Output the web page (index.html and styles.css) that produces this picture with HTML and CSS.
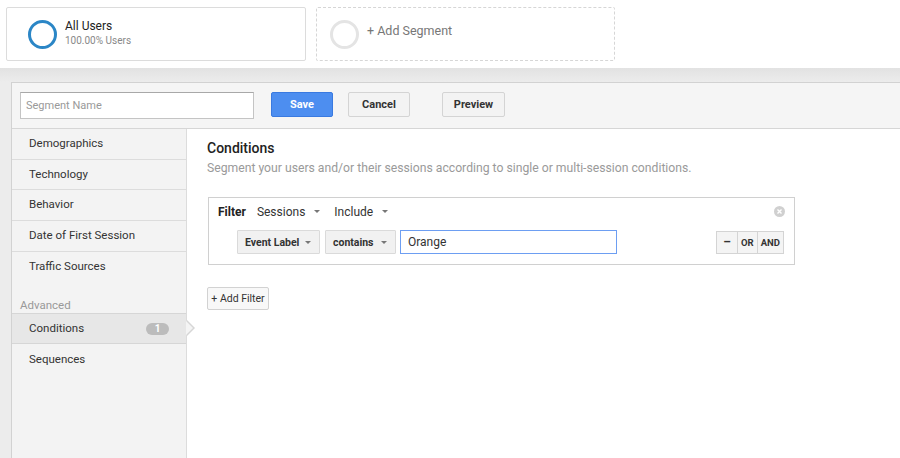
FILE: index.html
```html
<!DOCTYPE html>
<html>
<head>
<meta charset="utf-8">
<link rel="stylesheet" href="styles.css">
</head>
<body>
<div class="segbar">
  <div class="seg-card">
    <span class="ring ring-blue"></span>
    <div class="seg-text">
      <div class="seg-name">All Users</div>
      <div class="seg-sub">100.00% Users</div>
    </div>
  </div>
  <div class="seg-card seg-add">
    <span class="ring ring-gray"></span>
    <div class="seg-add-label">+ Add Segment</div>
  </div>
</div>
<div class="stage">
  <div class="panel">
    <div class="toolbar">
      <input class="name-input" type="text" placeholder="Segment Name">
      <button class="btn btn-save">Save</button>
      <button class="btn btn-cancel">Cancel</button>
      <button class="btn btn-preview">Preview</button>
    </div>
    <div class="editor">
      <nav class="nav">
        <div class="nav-item">Demographics</div>
        <div class="nav-item">Technology</div>
        <div class="nav-item">Behavior</div>
        <div class="nav-item">Date of First Session</div>
        <div class="nav-item nav-last">Traffic Sources</div>
        <div class="nav-group">Advanced</div>
        <div class="nav-item nav-active">Conditions <span class="badge">1</span><span class="pointer"></span></div>
        <div class="nav-item nav-plain">Sequences</div>
      </nav>
      <main class="content">
        <h1 class="title">Conditions</h1>
        <p class="desc">Segment your users and/or their sessions according to single or multi-session conditions.</p>
        <div class="filter">
          <div class="filter-head">
            <span class="filter-label">Filter</span>
            <span class="pick">Sessions <span class="caret"></span></span>
            <span class="pick">Include <span class="caret"></span></span>
            <span class="close">
              <svg width="11" height="11" viewBox="0 0 11 11"><circle cx="5.5" cy="5.5" r="5.5" fill="#d0d0d0"/><path d="M3.5 3.5 L7.5 7.5 M7.5 3.5 L3.5 7.5" stroke="#fff" stroke-width="1.4"/></svg>
            </span>
          </div>
          <div class="filter-row">
            <span class="drop drop-event">Event Label <span class="caret"></span></span>
            <span class="drop drop-op">contains <span class="caret"></span></span>
            <input class="value-input" type="text" value="Orange">
            <div class="logic">
              <span class="lbtn lbtn-minus">–</span><span class="lbtn">OR</span><span class="lbtn">AND</span>
            </div>
          </div>
        </div>
        <button class="add-filter">+ Add Filter</button>
      </main>
    </div>
  </div>
</div>
</body>
</html>
```

FILE: styles.css
```css
* { box-sizing: border-box; }
html, body { margin: 0; padding: 0; }
body {
  width: 900px;
  height: 458px;
  overflow: hidden;
  font-family: Roboto, "Liberation Sans", Arial, sans-serif;
  color: #333;
  background: #fff;
}
.segbar {
  height: 68px;
  padding: 7px 6px 0;
  display: flex;
  gap: 10px;
  background: #fff;
}
.seg-card {
  width: 300px;
  height: 54px;
  border: 1px solid #dcdcdc;
  border-radius: 2px;
  display: flex;
  align-items: center;
  padding-left: 21px;
}
.seg-add {
  width: 299px;
  border: 1px dashed #d6d6d6;
  padding-left: 13px;
}
.ring {
  width: 29px;
  height: 29px;
  border-radius: 50%;
  flex: none;
}
.ring-blue { border: 3px solid #2b86c6; }
.ring-gray { border: 3px solid #e4e4e4; }
.seg-text { margin-left: 8px; margin-top: -3px; }
.seg-name { font-size: 12px; color: #222; line-height: 15px; }
.seg-sub { font-size: 10px; color: #888; line-height: 13px; }
.seg-add-label { margin-left: 8px; font-size: 12.5px; color: #777; margin-top: -8px; }

.stage {
  height: 390px;
  padding: 14px 0 0 11px;
  background: linear-gradient(#e2e2e2, #ececec 14px, #ececec);
}
.panel {
  height: 376px;
  border-left: 1px solid #d2d2d2;
  border-top: 1px solid #d2d2d2;
  background: #fff;
  display: flex;
  flex-direction: column;
}
.toolbar {
  height: 46px;
  flex: none;
  background: #f5f5f5;
  border-bottom: 1px solid #d6d6d6;
  display: flex;
  align-items: flex-start;
  padding: 9px 0 0 8px;
}
.name-input {
  width: 234px;
  height: 27px;
  border: 1px solid #c4c4c4;
  border-top-color: #a8a8a8;
  padding: 0 5px;
  font-family: inherit;
  font-size: 11px;
  color: #333;
  background: #fff;
  outline: none;
}
.name-input::placeholder { color: #999; }
.btn {
  height: 25px;
  border-radius: 2px;
  font-family: inherit;
  font-size: 11px;
  font-weight: 700;
  padding: 0;
  cursor: pointer;
}
.btn-save {
  margin-left: 17px;
  width: 62px;
  background: #4d8ef0;
  border: 1px solid #3a7ae0;
  color: #fff;
}
.btn-cancel, .btn-preview {
  background: #f3f3f3;
  border: 1px solid #d4d4d4;
  color: #333;
}
.btn-cancel { margin-left: 15px; width: 62px; }
.btn-preview { margin-left: 32px; width: 63px; }

.editor {
  flex: 1;
  display: flex;
  min-height: 0;
}
.nav {
  width: 175px;
  flex: none;
  background: #f3f3f3;
  border-right: 1px solid #dcdcdc;
}
.nav-item {
  height: 30.7px;
  line-height: 29px;
  padding-left: 17px;
  font-size: 11.5px;
  color: #333;
  border-bottom: 1px solid #dcdcdc;
  position: relative;
}
.nav-last { border-bottom: none; }
.nav-plain { border-bottom: none; height: 31px; line-height: 30px; }
.nav-group {
  margin-top: 15px;
  height: 16px;
  line-height: 16px;
  padding-left: 8px;
  font-size: 11.5px;
  color: #999;
}
.nav-active {
  background: #e7e7e7;
  border-top: 1px solid #d6d6d6;
  border-bottom: 1px solid #d6d6d6;
  height: 31px;
  line-height: 29px;
}
.badge {
  position: absolute;
  left: 134px;
  top: 9px;
  width: 23px;
  height: 12px;
  border-radius: 6px;
  background: #bcbcbc;
  color: #fff;
  font-size: 10px;
  font-weight: 700;
  line-height: 12px;
  text-align: center;
}
.pointer {
  position: absolute;
  right: -9px;
  top: 6px;
  width: 0;
  height: 0;
  border-top: 8px solid transparent;
  border-bottom: 8px solid transparent;
  border-left: 8px solid #d6d6d6;
}
.pointer::after {
  content: "";
  position: absolute;
  left: -9px;
  top: -7px;
  border-top: 7px solid transparent;
  border-bottom: 7px solid transparent;
  border-left: 7px solid #f4f4f4;
}

.content {
  flex: 1;
  padding: 11px 0 0 20px;
}
.title {
  margin: 0;
  font-size: 14px;
  font-weight: 500;
  color: #222;
  line-height: 16px;
}
.desc {
  margin: 4px 0 0;
  font-size: 12.2px;
  color: #9a9a9a;
  line-height: 16px;
}
.filter {
  margin-top: 21px;
  margin-left: 1px;
  width: 587px;
  height: 68px;
  border: 1px solid #d0d0d0;
  padding: 6px 0 0 9px;
}
.filter-head {
  display: flex;
  align-items: center;
  height: 15px;
  font-size: 12px;
  position: relative;
}
.filter-label { font-weight: 700; color: #222; }
.pick { margin-left: 11px; color: #333; display: inline-flex; align-items: center; }
.pick + .pick { margin-left: 14px; }
.caret {
  display: inline-block;
  width: 0;
  height: 0;
  border-left: 3.5px solid transparent;
  border-right: 3.5px solid transparent;
  border-top: 3.5px solid #777;
  margin-left: 9px;
}
.close {
  position: absolute;
  right: 9px;
  top: 2px;
  line-height: 0;
}
.filter-row {
  display: flex;
  align-items: center;
  margin-top: 11px;
  padding-left: 19px;
}
.drop {
  height: 24px;
  background: #f1f1f1;
  border: 1px solid #dadada;
  font-size: 10.5px;
  font-weight: 700;
  color: #333;
  display: inline-flex;
  align-items: center;
  padding-left: 7px;
  border-radius: 1px;
}
.drop-event { width: 83px; }
.drop-op { width: 71px; margin-left: 5px; }
.drop .caret { margin-left: auto; margin-right: 8px; }
.value-input {
  margin-left: 4px;
  width: 217px;
  height: 24px;
  border: 1px solid #6d9ef2;
  padding: 0 7px;
  font-family: inherit;
  font-size: 12px;
  color: #333;
  outline: none;
}
.logic {
  margin-left: 99px;
  display: flex;
  height: 23px;
  border: 1px solid #d4d4d4;
  background: #f4f4f4;
}
.lbtn {
  font-size: 9.5px;
  font-weight: 700;
  color: #333;
  padding: 0 3px;
  line-height: 21px;
  border-left: 1px solid #d4d4d4;
  text-align: center;
}
.lbtn:first-child { border-left: none; }
.lbtn-minus { width: 20px; padding: 0; font-size: 12px; }
.add-filter {
  margin-top: 22px;
  width: 62px;
  height: 23px;
  padding: 0;
  border: 1px solid #d2d2d2;
  border-radius: 2px;
  background: #f8f8f8;
  font-family: inherit;
  font-size: 10.5px;
  color: #333;
}
```
